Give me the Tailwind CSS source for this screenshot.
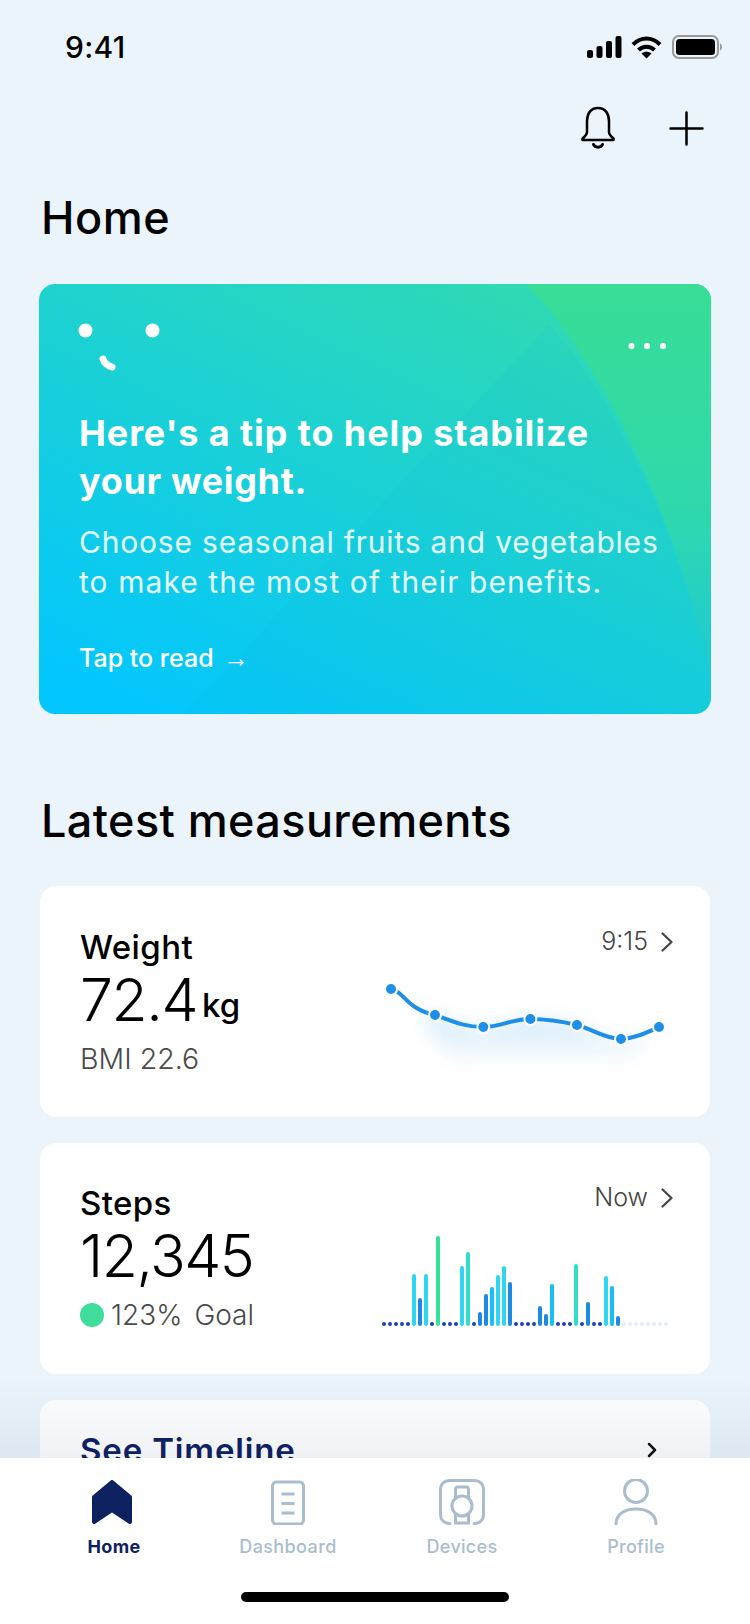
<!doctype html>
<html>
<head>
<meta charset="utf-8">
<script src="https://cdn.jsdelivr.net/npm/@tailwindcss/browser@4"></script>
</head>
<body>
<div class="w-[750px] h-[1624px] flex flex-col overflow-hidden bg-[#ebf4fb] text-black font-['Inter',sans-serif]">
  <main class="relative flex-1 overflow-hidden">
    <div class="h-[94px] flex items-center justify-between pl-[65px] pr-[28px]">
      <span class="text-[30px] leading-none font-medium tracking-[0.3px]">9:41</span>
      <div class="flex items-center gap-[9px]">
        <svg width="35" height="22" viewBox="0 0 35 22"><rect x="0" y="14" width="6" height="8" rx="2"/><rect x="9.500" y="10" width="6" height="12" rx="2"/><rect x="19" y="5" width="6" height="17" rx="2"/><rect x="28.500" y="0" width="6" height="22" rx="2"/></svg>
        <svg width="31" height="23" viewBox="0 0 31 23" fill="none" stroke="#000" stroke-width="4"><path d="M2 8.500C10 0.500 21 0.500 29 8.500"/><path d="M7.500 14C12 9.500 19 9.500 23.500 14"/><path d="M15.500 22.500L10.500 17.500C13.500 15 17.500 15 20.500 17.500Z" fill="#000" stroke="none"/></svg>
        <svg width="50" height="24" viewBox="0 0 50 24" class="ml-[1px]"><rect x="1" y="1" width="45" height="22" rx="6" fill="none" stroke="#9a9a9a" stroke-width="2"/><rect x="4" y="4" width="39" height="16" rx="3.500"/><path d="M48 8.500C49.500 9 50 10.500 50 12C50 13.500 49.500 15 48 15.500Z" fill="#9a9a9a"/></svg>
      </div>
    </div>

    <div class="h-[68px] flex items-center justify-end gap-[53px] pr-[46px]">
      <svg width="36" height="44" viewBox="0 0 36 44" fill="none" stroke="#000" stroke-width="2.500" stroke-linecap="round" stroke-linejoin="round"><path d="M18 2C10.500 2 7 8 7 15V26C7 28.500 5.500 30 2.500 32.500V34H33.500V32.500C30.500 30 29 28.500 29 26V15C29 8 25.500 2 18 2Z"/><path d="M13.500 38.500C15 42 21 42 22.500 38.500" stroke-width="3"/></svg>
      <svg width="35" height="35" viewBox="0 0 35 35" fill="none" stroke="#000" stroke-width="2.500" stroke-linecap="round"><path d="M17.500 1.500V33.500M1.500 17.500H33.500"/></svg>
    </div>

    <h1 class="mt-[30px] ml-[41px] text-[45px] leading-[52px] font-medium tracking-[0.5px]">Home</h1>

    <section class="relative mt-[40px] mx-[39px] h-[430px] rounded-[16px] overflow-hidden bg-[linear-gradient(25deg,#02c6ff_5%,#30dab2_90%)] text-white pl-[40px] pr-[45px] pt-[39px]">
      <svg class="absolute inset-0" width="672" height="430" viewBox="0 0 672 430">
        <defs>
          <linearGradient id="corner" x1="0" y1="0" x2="0" y2="1"><stop offset="0" stop-color="#39dd96"/><stop offset="0.55" stop-color="#2fd9ab"/><stop offset="1" stop-color="#1cc9d6"/></linearGradient>
        </defs>
        <path d="M145 430L510 41C575 110 645 260 672 400V430Z" fill="#10b4dc" fill-opacity="0.09"/>
        <path d="M488 0C560 75 640 230 672 400V0Z" fill="url(#corner)"/>
      </svg>
      <div class="relative flex items-start justify-between h-[46px]">
        <svg width="80" height="46" viewBox="0 0 80 46" fill="#fff" class="overflow-visible"><circle cx="6.500" cy="7.500" r="7"/><circle cx="73.500" cy="7.500" r="7"/><path d="M24 36Q26 42 33 44" fill="none" stroke="#fff" stroke-width="7" stroke-linecap="round"/></svg>
        <svg width="38" height="8" viewBox="0 0 38 8" fill="#fff" class="mt-[19px]"><circle cx="3.500" cy="4" r="3"/><circle cx="19" cy="4" r="3"/><circle cx="35" cy="4" r="3"/></svg>
      </div>
      <h2 class="relative mt-[40px] text-[36px] leading-[48px] font-bold tracking-[0.9px]">Here's a tip to help stabilize<br><span class="tracking-[0.65px]">your weight.</span></h2>
      <p class="relative mt-[17px] text-[30px] leading-[40px] text-[#e4fbfb] tracking-[0.8px]">Choose seasonal fruits and vegetables<br><span class="tracking-[1.07px]">to make the most of their benefits.</span></p>
      <p class="relative mt-[40px] text-[25px] leading-[32px] font-medium">Tap to read <span class="ml-[3px] text-[26px] font-['Liberation_Sans',sans-serif]">→</span></p>
    </section>

    <h2 class="mt-[81px] ml-[41px] text-[45px] leading-[52px] font-medium tracking-[0.4px]">Latest measurements</h2>

    <article class="mt-[39px] mx-[40px] h-[231px] rounded-[16px] bg-white flex justify-between pl-[40px] pr-[37px]">
      <div class="pt-[41px]">
        <h3 class="text-[33px] leading-[40px] font-medium tracking-[0.4px]">Weight</h3>
        <div class="h-[65px] flex items-end"><span class="text-[59px] leading-[64px] font-light tracking-[-1.500px]">72.4</span><span class="ml-[5px] mb-[7px] text-[33px] leading-[40px] font-medium">kg</span></div>
        <p class="mt-[9px] text-[28.500px] leading-[36px] font-light text-[#4a4a4a]">BMI 22.6</p>
      </div>
      <div class="flex flex-col items-end pt-[38px]">
        <div class="h-[36px] flex items-center gap-[13px] text-[25px] font-light text-[#444]">
          <span>9:15</span>
          <svg width="12" height="20" viewBox="0 0 12 20" fill="none" stroke="#444" stroke-width="2.200" stroke-linecap="round" stroke-linejoin="round"><path d="M1.500 1.500L10.500 10L1.500 18.500"/></svg>
        </div>
        <svg class="mt-[15px]" width="293" height="100" viewBox="0 0 293 100">
          <defs>
            <linearGradient id="glow" x1="0" y1="0" x2="0" y2="1"><stop offset="0" stop-color="#1e88e5" stop-opacity="0.22"/><stop offset="1" stop-color="#1e88e5" stop-opacity="0"/></linearGradient>
            <filter id="soft" x="-20%" y="-40%" width="140%" height="180%"><feGaussianBlur stdDeviation="9"/></filter>
          </defs>
          <path d="M40 34C60 44 84 52 103 52C120 52 132 44 150 44C166 44 180 46 197 50C212 54 226 64 241 64C250 64 260 60 270 56L250 90H70Z" fill="url(#glow)" filter="url(#soft)"/>
          <path d="M11 14C24 16 26 34 55 40C72 46 84 52 103 52C120 52 132 44 150 44C166 44 180 46 197 50C212 54 226 64 241 64C254 64 268 57 279 52" fill="none" stroke="#1e8fe8" stroke-width="4" stroke-linecap="round"/>
          <g fill="#1e8fe8" stroke="#fff" stroke-width="2">
            <circle cx="11" cy="14" r="6"/><circle cx="55" cy="40" r="6"/><circle cx="103.300" cy="52" r="6"/><circle cx="150.400" cy="44" r="6"/><circle cx="197" cy="50" r="6"/><circle cx="241" cy="64" r="6"/><circle cx="279" cy="52" r="6"/>
          </g>
        </svg>
      </div>
    </article>

    <article class="mt-[26px] mx-[40px] h-[231px] rounded-[16px] bg-white flex justify-between pl-[40px] pr-[37px]">
      <div class="pt-[40px]">
        <h3 class="text-[33px] leading-[40px] font-medium tracking-[0.4px]">Steps</h3>
        <div class="h-[65px] flex items-end"><span class="text-[59px] leading-[64px] font-light tracking-[-1.500px]">12,345</span></div>
        <div class="mt-[9px] h-[36px] flex items-center text-[28px] font-light text-[#4a4a4a]"><span class="w-[24px] h-[24px] rounded-full bg-[#3fdc9b]"></span><span class="ml-[7px]">123%</span><span class="ml-[12px]">Goal</span></div>
      </div>
      <div class="flex flex-col items-end pt-[37px]">
        <div class="h-[36px] flex items-center gap-[13px] text-[25px] font-light text-[#444]">
          <span>Now</span>
          <svg width="12" height="20" viewBox="0 0 12 20" fill="none" stroke="#444" stroke-width="2.200" stroke-linecap="round" stroke-linejoin="round"><path d="M1.500 1.500L10.500 10L1.500 18.500"/></svg>
        </div>
        <svg class="mt-[14px]" width="303" height="100" viewBox="0 60 303 100">
          <g fill="#1d3fb8">
            <circle cx="14" cy="154" r="2"/><circle cx="20" cy="154" r="2"/><circle cx="26" cy="154" r="2"/><circle cx="32" cy="154" r="2"/><circle cx="38" cy="154" r="2"/><circle cx="62" cy="154" r="2"/><circle cx="74" cy="154" r="2"/><circle cx="80" cy="154" r="2"/><circle cx="86" cy="154" r="2"/><circle cx="104" cy="154" r="2"/><circle cx="146" cy="154" r="2"/><circle cx="152" cy="154" r="2"/><circle cx="158" cy="154" r="2"/><circle cx="164" cy="154" r="2"/><circle cx="188" cy="154" r="2"/><circle cx="194" cy="154" r="2"/><circle cx="200" cy="154" r="2"/><circle cx="212" cy="154" r="2"/><circle cx="224" cy="154" r="2"/><circle cx="230" cy="154" r="2"/>
          </g>
          <g fill="#e3edf3">
            <circle cx="254" cy="154" r="2"/><circle cx="260" cy="154" r="2"/><circle cx="266" cy="154" r="2"/><circle cx="272" cy="154" r="2"/><circle cx="278" cy="154" r="2"/><circle cx="284" cy="154" r="2"/><circle cx="290" cy="154" r="2"/><circle cx="296" cy="154" r="2"/>
          </g>
          <g>
            <rect x="42" y="104" width="4" height="52" rx="2" fill="#2fd6f2"/>
            <rect x="48" y="128" width="4" height="28" rx="2" fill="#1e88e5"/>
            <rect x="54" y="104" width="4" height="52" rx="2" fill="#2fd6f2"/>
            <rect x="66" y="66" width="4" height="90" rx="2" fill="#33e39a"/>
            <rect x="90" y="96" width="4" height="60" rx="2" fill="#2fd6f2"/>
            <rect x="96" y="82" width="4" height="74" rx="2" fill="#2fe0c8"/>
            <rect x="108" y="142" width="4" height="14" rx="2" fill="#1e88e5"/>
            <rect x="114" y="124" width="4" height="32" rx="2" fill="#1e88e5"/>
            <rect x="120" y="117" width="4" height="39" rx="2" fill="#18bdfc"/>
            <rect x="126" y="105" width="4" height="51" rx="2" fill="#2fd6f2"/>
            <rect x="132" y="96" width="4" height="60" rx="2" fill="#2fd6f2"/>
            <rect x="138" y="112" width="4" height="44" rx="2" fill="#1e88e5"/>
            <rect x="168" y="136" width="4" height="20" rx="2" fill="#1e88e5"/>
            <rect x="174" y="144" width="4" height="12" rx="2" fill="#1e88e5"/>
            <rect x="180" y="114" width="4" height="42" rx="2" fill="#18bdfc"/>
            <rect x="204" y="94" width="4" height="62" rx="2" fill="#2fe0c8"/>
            <rect x="216" y="132" width="4" height="24" rx="2" fill="#1e88e5"/>
            <rect x="234" y="106" width="4" height="50" rx="2" fill="#2fd6f2"/>
            <rect x="240" y="116" width="4" height="40" rx="2" fill="#18bdfc"/>
            <rect x="246" y="146" width="4" height="10" rx="2" fill="#1e88e5"/>
          </g>
        </svg>
      </div>
    </article>

    <article class="mt-[26px] mx-[40px] h-[231px] rounded-[16px] bg-white flex justify-between items-start pl-[40px] pr-[53px] pt-[30px]">
      <span class="text-[33px] leading-[40px] font-semibold text-[#0d2060] tracking-[0.85px]">See Timeline</span>
      <svg class="mt-[12px]" width="10" height="16" viewBox="0 0 10 16" fill="none" stroke="#111" stroke-width="2.500" stroke-linecap="round" stroke-linejoin="round"><path d="M2 2L8 8L2 14"/></svg>
    </article>

    <div class="absolute left-0 right-0 bottom-0 h-[80px] bg-linear-to-b from-[#1a3a70]/0 to-[#1a3a70]/7"></div>
  </main>

  <nav class="h-[166px] shrink-0 bg-white">
    <div class="grid grid-cols-4 px-[27px] pt-[21px]">
      <div class="flex flex-col items-center">
        <div class="h-[46px] flex items-center mr-[4px]">
          <svg width="40" height="44" viewBox="0 0 40 44" fill="#0d2060" stroke="#0d2060" stroke-width="4" stroke-linejoin="round"><path d="M20 2L38 17V42L20 30L2 42V17Z"/></svg>
        </div>
        <span class="mt-[10px] text-[18px] leading-[24px] font-bold text-[#0d2060] tracking-[0.3px]">Home</span>
      </div>
      <div class="flex flex-col items-center">
        <svg width="46" height="46" viewBox="0 0 46 46" fill="none" stroke="#a9bdce" stroke-width="3"><rect x="7.500" y="3" width="31" height="42" rx="4"/><path d="M16.500 15H29.500M16.500 24.500H29.500M16.500 34H29.500"/></svg>
        <span class="mt-[10px] text-[18px] leading-[24px] font-medium text-[#a9bdce] tracking-[0.4px]">Dashboard</span>
      </div>
      <div class="flex flex-col items-center">
        <svg width="46" height="46" viewBox="0 0 46 46" fill="none" stroke="#a9bdce" stroke-width="3" stroke-linecap="round"><path d="M11 44.500C5 44.500 1.500 41 1.500 35V11C1.500 5 5 1.500 11 1.500H35C41 1.500 44.500 5 44.500 11V35C44.500 41 41 44.500 35 44.500"/><circle cx="23" cy="27" r="10"/><path d="M16.500 19V10C16.500 9 17.500 8 18.500 8H27.500C28.500 8 29.500 9 29.500 10V19M16.500 35V44H29.500V35"/></svg>
        <span class="mt-[10px] text-[18px] leading-[24px] font-medium text-[#a9bdce] tracking-[0.3px]">Devices</span>
      </div>
      <div class="flex flex-col items-center">
        <svg width="44" height="46" viewBox="0 0 44 46" fill="none" stroke="#a9bdce" stroke-width="3" stroke-linecap="round"><circle cx="22" cy="12" r="11.500"/><path d="M2 45C2 35 11 30 22 30C33 30 42 35 42 45"/></svg>
        <span class="mt-[10px] text-[18px] leading-[24px] font-medium text-[#a9bdce] tracking-[0.3px]">Profile</span>
      </div>
    </div>
    <div class="mt-[33px] mx-auto w-[268px] h-[10px] rounded-full bg-black"></div>
  </nav>
</div>
</body>
</html>
